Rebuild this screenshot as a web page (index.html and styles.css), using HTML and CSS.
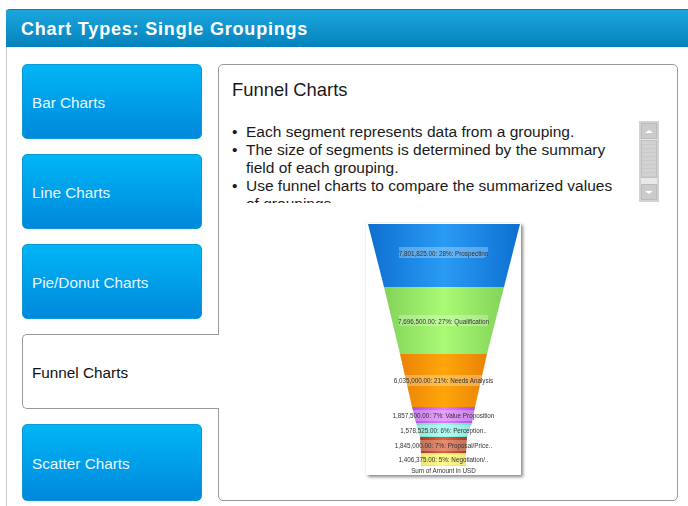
FILE: index.html
```html
<!DOCTYPE html>
<html lang="en">
<head>
<meta charset="utf-8">
<title>Chart Types: Single Groupings</title>
<link rel="stylesheet" href="styles.css">
</head>
<body>
<div class="app">
  <header class="header"><h1 class="header-title">Chart Types: Single Groupings</h1></header>
  <div class="content">
    <nav class="tabs">
      <div class="tab">Bar Charts</div>
      <div class="tab">Line Charts</div>
      <div class="tab">Pie/Donut Charts</div>
      <div class="tab tab-active">Funnel Charts</div>
      <div class="tab tab-last">Scatter Charts</div>
    </nav>
    <main class="panel">
      <h2 class="panel-title">Funnel Charts</h2>
      <div class="desc-row">
        <ul class="desc">
          <li>Each segment represents data from a grouping.</li>
          <li>The size of segments is determined by the summary field of each grouping.</li>
          <li>Use funnel charts to compare the summarized values of groupings.</li>
        </ul>
        <div class="scrollbar">
          <div class="sb-btn"><span class="sb-up"></span></div>
          <div class="sb-thumb"></div>
          <div class="sb-track"></div>
          <div class="sb-btn"><span class="sb-down"></span></div>
        </div>
      </div>
      <div class="chart">
        <svg class="chart-svg" width="155" height="252" viewBox="0 0 155 252">
          <defs>
            <linearGradient id="gBlue"><stop offset="0" stop-color="#0d6fd0"/><stop offset=".5" stop-color="#2a9bf5"/><stop offset="1" stop-color="#0d6fd0"/></linearGradient>
            <linearGradient id="gGreen"><stop offset="0" stop-color="#82d35a"/><stop offset=".5" stop-color="#abfa75"/><stop offset="1" stop-color="#82d35a"/></linearGradient>
            <linearGradient id="gOrange"><stop offset="0" stop-color="#ea8205"/><stop offset=".5" stop-color="#ffa60a"/><stop offset="1" stop-color="#ea8205"/></linearGradient>
            <linearGradient id="gPurple"><stop offset="0" stop-color="#b050e0"/><stop offset=".5" stop-color="#e07cff"/><stop offset="1" stop-color="#b050e0"/></linearGradient>
            <linearGradient id="gTeal"><stop offset="0" stop-color="#70d8c8"/><stop offset=".5" stop-color="#98fff0"/><stop offset="1" stop-color="#70d8c8"/></linearGradient>
            <linearGradient id="gRed"><stop offset="0" stop-color="#a83c20"/><stop offset=".5" stop-color="#e0623c"/><stop offset="1" stop-color="#a83c20"/></linearGradient>
            <linearGradient id="gYellow"><stop offset="0" stop-color="#e6de40"/><stop offset=".5" stop-color="#fdf860"/><stop offset="1" stop-color="#e6de40"/></linearGradient>
          </defs>
          <polygon fill="url(#gBlue)" points="2,1 154,1 138,64 18,64"/>
          <polygon fill="url(#gGreen)" points="18,64 138,64 121,131 34,131"/>
          <polygon fill="url(#gOrange)" points="34,131 121,131 109,184 46,184"/>
          <polygon fill="url(#gPurple)" points="46,184 109,184 106,200 50,200"/>
          <polygon fill="url(#gTeal)" points="50,200 106,200 101,214 54,214"/>
          <polygon fill="url(#gRed)" points="54,214 101,214 100,230 55,230"/>
          <polygon fill="url(#gYellow)" points="55,230 100,230 100,243 55,243"/>
          <g class="lbl-bg">
            <rect x="33" y="24" width="89" height="11"/>
            <rect x="33" y="92" width="89" height="11"/>
            <rect x="28" y="152" width="99" height="11"/>
            <rect x="27" y="187" width="100" height="11"/>
            <rect x="34" y="202" width="87" height="11"/>
            <rect x="30" y="217" width="94" height="11"/>
            <rect x="34" y="231" width="87" height="11"/>
          </g>
          <g class="lbl">
            <text x="77.5" y="32.5">7,801,825.00: 28%: Prospecting</text>
            <text x="77.5" y="100.5">7,696,500.00: 27%: Qualification</text>
            <text x="77.5" y="160">6,035,000.00: 21%: Needs Analysis</text>
            <text x="77.5" y="194.5">1,857,500.00: 7%: Value Proposition</text>
            <text x="77.5" y="209.5">1,578,525.00: 6%: Perception..</text>
            <text x="77.5" y="224.5">1,845,000.00: 7%: Proposal/Price..</text>
            <text x="77.5" y="238.5">1,406,375.00: 5%: Negotiation/..</text>
            <text x="77.5" y="249.5">Sum of Amount in USD</text>
          </g>
        </svg>
      </div>
    </main>
  </div>
</div>
</body>
</html>
```

FILE: styles.css
```css
* { box-sizing: border-box; }
html, body { margin: 0; height: 100%; background: #fff; overflow: hidden; }
body { padding: 9px 0 0 6px; font-family: "Liberation Sans", Arial, sans-serif; }
.app { height: 100%; border-left: 1px solid #c9c9c9; margin-right: 0; }
.header {
  height: 38px;
  margin-left: -1px;
  border-radius: 4px 0 0 0;
  border-top: 1px solid #0a7fb4;
  background: linear-gradient(#1ba6dd, #0682bd);
  display: flex;
  align-items: center;
  padding: 1px 0 0 15px;
}
.header-title { margin: 0; font-size: 18px; font-weight: bold; color: #fff; letter-spacing: .81px; }
.content { display: flex; padding: 17px 10px 0 15px; }
.tabs { width: 180px; flex: none; display: flex; flex-direction: column; gap: 15px; }
.tab {
  height: 75px;
  display: flex;
  align-items: center;
  padding: 2px 0 0 9px;
  font-size: 15.3px;
  color: #e8f7ff;
  border-radius: 5px;
  background: linear-gradient(#00b6f5, #0088dc);
  border: 1px solid #0a9ad6;
}
.tab-last { height: 77px; }
.tab-active {
  position: relative;
  z-index: 1;
  width: 197px;
  background: #fff;
  color: #111;
  border: 1px solid #9a9a9a;
  border-right: 0;
  border-radius: 5px 0 0 5px;
}
.panel {
  margin-left: 16px;
  flex: 1;
  height: 437px;
  border: 1px solid #9a9a9a;
  border-radius: 5px;
  padding: 14px 0 0 13px;
}
.panel-title { margin: 0; font-size: 18.4px; font-weight: normal; color: #1a1a1a; line-height: 21px; }
.desc-row { display: flex; margin-top: 23px; height: 80px; }
.desc {
  margin: 0;
  padding: 0 0 0 14px;
  width: 390px;
  height: 80px;
  overflow: hidden;
  font-size: 15.5px;
  line-height: 18px;
  color: #1a1a1a;
  list-style-type: "•  ";
}
.scrollbar {
  flex: none;
  margin: -2px 0 0 17px;
  width: 20px;
  height: 81px;
  border: 2px solid #d2d2d2;
  background: #e8e8e8;
  display: flex;
  flex-direction: column;
}
.sb-btn { height: 16px; background: #cbcbcb; border: 1px solid #bcbcbc; display: flex; align-items: center; justify-content: center; }
.sb-up { border: 4px solid transparent; border-top: 0; border-bottom: 3px solid #fff; }
.sb-down { border: 4px solid transparent; border-bottom: 0; border-top: 3px solid #fff; }
.sb-thumb { height: 38px; margin-top: 1px; background: repeating-linear-gradient(#d2d2d2 0 3px, #c9c9c9 3px 4px); border: 1px solid #c0c0c0; }
.sb-track { flex: 1; }
.chart {
  width: 155px;
  height: 252px;
  margin: 20px 0 0 134px;
  background: #fff;
  box-shadow: 2px 2px 3px #8a8a8a, 0 0 1px #ccc;
}
.chart-svg { display: block; filter: blur(.3px); }
.lbl text { font-size: 6.3px; fill: #333; text-anchor: middle; font-family: "Liberation Sans", Arial, sans-serif; }
.lbl-bg rect { fill: #fff; opacity: .28; }
```
